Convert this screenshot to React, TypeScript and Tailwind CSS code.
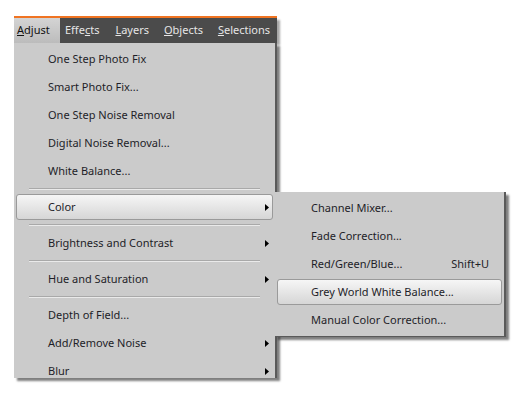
import React from "react";

type Item = { label: string; sub?: boolean; sep?: boolean; active?: boolean; shortcut?: string };

const mainItems: Item[] = [
  { label: "One Step Photo Fix" },
  { label: "Smart Photo Fix..." },
  { label: "One Step Noise Removal" },
  { label: "Digital Noise Removal..." },
  { label: "White Balance...", sep: true },
  { label: "Color", sub: true, active: true, sep: true },
  { label: "Brightness and Contrast", sub: true, sep: true },
  { label: "Hue and Saturation", sub: true, sep: true },
  { label: "Depth of Field..." },
  { label: "Add/Remove Noise", sub: true },
  { label: "Blur", sub: true },
];

const colorItems: Item[] = [
  { label: "Channel Mixer..." },
  { label: "Fade Correction..." },
  { label: "Red/Green/Blue...", shortcut: "Shift+U" },
  { label: "Grey World White Balance...", active: true },
  { label: "Manual Color Correction..." },
];

const Arrow = () => (
  <svg width="4" height="7" viewBox="0 0 4 7" className="absolute right-[3px] top-[9px]">
    <path d="M0 0 L4 3.5 L0 7 Z" fill="#000" />
  </svg>
);

const Row = ({ item, textLeft }: { item: Item; textLeft: string }) => (
  <>
    <div className="h-[28px] px-[2px] py-[1px]">
      <div
        className={
          "relative h-[26px] flex items-center rounded-[3px] border " +
          (item.active
            ? "border-[#9a9a9a] bg-gradient-to-b from-[#f6f6f6] to-[#d6d6d6]"
            : "border-transparent")
        }
      >
        <span className={textLeft + " text-[#1e1e28]"}>{item.label}</span>
        {item.shortcut && <span className="absolute right-[12px] text-[#1e1e28]">{item.shortcut}</span>}
        {item.sub && <Arrow />}
      </div>
    </div>
    {item.sep && (
      <div className="h-[8px] flex items-center px-[15px]">
        <div className="w-full h-[2px] border-t border-[#a9a9a9] border-b-white/60 border-b" />
      </div>
    )}
  </>
);

const App = () => {
  return (
    <div
      className="w-[518px] h-[398px] bg-white pt-[16px] pl-[14px] text-[11px] overflow-hidden"
      style={{ fontFamily: '"Noto Sans", "Open Sans", sans-serif' }}
    >
      <div className="relative w-[263px]">
        <div className="h-[2px] bg-[#f07422]" />
        <div className="h-[25px] flex items-center bg-[#4b4b4b] text-[#e6e6e6] shadow-[3px_2px_2px_rgba(0,0,0,0.35)]">
          <div className="h-full w-[46px] flex items-center pl-[3px] bg-gradient-to-b from-[#d4d4d4] to-[#bcbcbc] text-[#111]">
            <span><u>A</u>djust</span>
          </div>
          <span className="ml-[5px]">Effe<u>c</u>ts</span>
          <span className="ml-[16px]"><u>L</u>ayers</span>
          <span className="ml-[15px]"><u>O</u>bjects</span>
          <span className="ml-[15px]"><u>S</u>elections</span>
        </div>
        <div className="h-[335px] overflow-hidden bg-[#cbcbcb] border-r-2 border-[#5a5a5a] pt-[2px] shadow-[3px_3px_2px_rgba(0,0,0,0.5)]">
          {mainItems.map((item) => (
            <Row key={item.label} item={item} textLeft="ml-[31px]" />
          ))}
        </div>
        <div className="absolute left-[261px] top-[176px] w-[231px] bg-[#cbcbcb] border-r-2 border-b border-[#5a5a5a] py-[2px] shadow-[3px_3px_2px_rgba(0,0,0,0.5)]">
          {colorItems.map((item) => (
            <Row key={item.label} item={item} textLeft="ml-[33px]" />
          ))}
        </div>
      </div>
    </div>
  );
};

export default App;
